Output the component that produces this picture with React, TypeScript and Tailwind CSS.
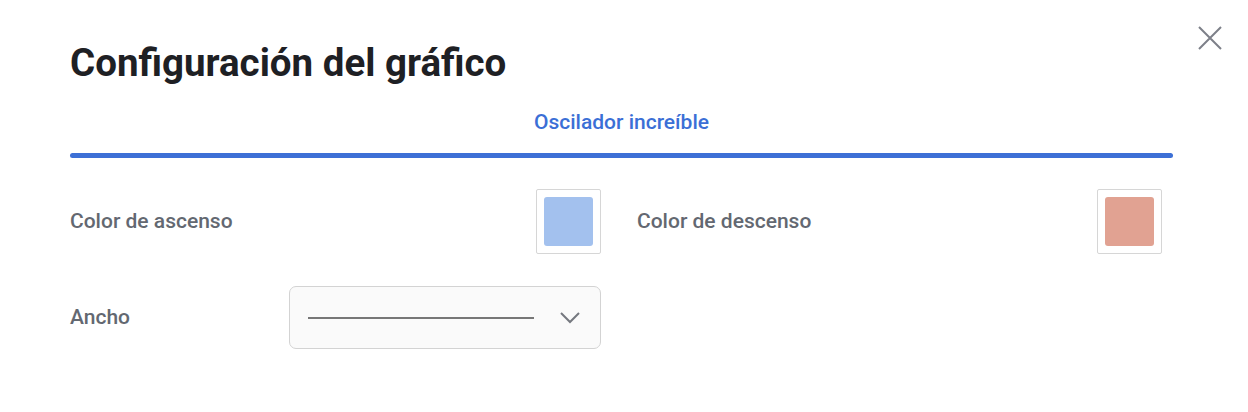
import React from "react";

export default function App() {
  return (
    <div className="relative w-[1248px] h-[412px] bg-white" style={{ fontFamily: "Roboto, 'Liberation Sans', sans-serif" }}>
      <button className="absolute right-[26px] top-[26px] w-[24px] h-[24px] text-[#7d8089]">
        <svg viewBox="0 0 24 24" width="24" height="24" fill="none" stroke="currentColor" strokeWidth="2">
          <path d="M1 1L23 23M23 1L1 23" />
        </svg>
      </button>
      <div className="pl-[70px] pr-[75px] pt-[40px]">
        <h1 className="text-[38.5px] leading-[46px] font-bold text-[#1e2024]">Configuración del gráfico</h1>
        <div className="mt-[23px] flex flex-col items-center">
          <div className="text-[21px] leading-[26px] font-medium text-[#3b6fd6]">Oscilador increíble</div>
          <div className="mt-[18px] w-full h-[5px] rounded-full bg-[#3d70d6]"></div>
        </div>
        <div className="mt-[31px] grid grid-cols-[531px_525px] gap-x-[36px] gap-y-[32px]">
          <div className="flex items-center justify-between">
            <span className="text-[21px] font-medium text-[#636871]">Color de ascenso</span>
            <div className="w-[65px] h-[65px] border border-[#d6d6d6] rounded-[2px] p-[7px]">
              <div className="w-full h-full rounded-[3px] bg-[#a3c1ee]"></div>
            </div>
          </div>
          <div className="flex items-center justify-between">
            <span className="text-[21px] font-medium text-[#636871]">Color de descenso</span>
            <div className="w-[65px] h-[65px] border border-[#d6d6d6] rounded-[2px] p-[7px]">
              <div className="w-full h-full rounded-[3px] bg-[#e1a292]"></div>
            </div>
          </div>
          <div className="flex items-center">
            <span className="w-[219px] text-[21px] font-medium text-[#636871]">Ancho</span>
            <div className="flex-1 h-[63px] border border-[#d3d3d3] rounded-[7px] bg-[#fafafa] flex items-center pl-[18px] pr-[20px]">
              <div className="w-[226px] h-[2px] bg-[#777777]"></div>
              <svg className="ml-auto" width="20" height="12" viewBox="0 0 20 12" fill="none" stroke="#75787f" strokeWidth="2">
                <path d="M1 1L10 10L19 1" />
              </svg>
            </div>
          </div>
        </div>
      </div>
    </div>
  );
}
